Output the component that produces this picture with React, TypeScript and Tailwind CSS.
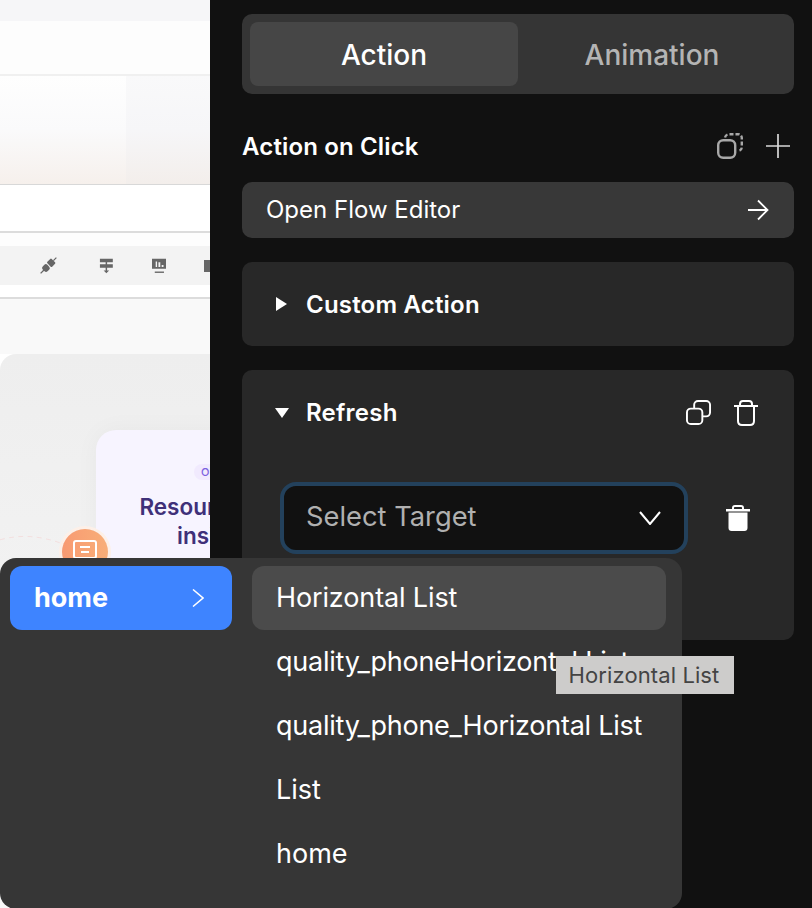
import React from "react";

const font = { fontFamily: "Inter, 'Liberation Sans', sans-serif" };

function Preview() {
  return (
    <div className="flex h-[908px] w-[210px] shrink-0 flex-col overflow-hidden bg-white">
      <div className="h-[21px] bg-[#f6f6f8]" />
      <div className="h-[55px] border-b-2 border-[#f0f0f0] bg-[#fdfdfd]" />
      <div className="flex h-[109px] border-b border-[#d8d8d8]">
        <div className="w-[126px] bg-gradient-to-b from-[#fefefe] via-[#fafafb] to-[#f6f0ec]" />
        <div className="flex-1 bg-gradient-to-b from-[#f9f9fa] via-[#f6f6f8] to-[#f3eeeb]" />
      </div>
      <div className="h-[48px] border-b-2 border-[#dcdcdc] bg-white" />
      <div className="h-[13px] bg-[#fdfdfd]" />
      <div className="flex h-[39px] items-center bg-[#f3f3f3] text-[#666666]">
        <svg viewBox="0 0 16 16" className="ml-[40px] h-[17px] w-[17px] overflow-visible" fill="currentColor" stroke="none">
          <g transform="rotate(45 8 8)">
            <rect x="4.800" y="1.500" width="6.400" height="5.800" rx="1" />
            <rect x="4.800" y="8.300" width="6.400" height="6.200" rx="2" />
            <rect x="7.400" y="-2.500" width="1.200" height="4" />
            <rect x="7.400" y="14" width="1.200" height="4.500" />
          </g>
        </svg>
        <svg viewBox="0 0 16 16" className="ml-[42px] h-[16px] w-[16px]" fill="currentColor">
          <path d="M1 0h14v4H1zM1 6h14v4H1z" />
          <path d="M7.200 3h1.600v10H11l-3 3-3-3h2.200z" />
        </svg>
        <svg viewBox="0 0 16 16" className="ml-[38px] h-[16px] w-[16px]" fill="currentColor">
          <path fillRule="evenodd" d="M0 0h16v11H0zM4 3h1.500v6H4zM7 4h2v5H7zM10.500 7h2v2h-2z" />
          <path d="M3 14h10v1.500H3z" />
        </svg>
        <div className="ml-[38px] h-[12px] w-[6px] bg-[#666666]" />
      </div>
      <div className="h-[14px] border-b-2 border-[#dcdcdc] bg-white" />
      <div className="h-[55px] bg-[#f9f9f9]" />
      <div className="relative flex-1 rounded-tl-[16px] bg-gradient-to-b from-[#eeeeee] to-[#f8f8f8] pl-[96px] pt-[76px]">
        <div className="h-[300px] w-[160px] rounded-tl-[20px] bg-[#f7f4ff] pt-[34px] shadow-[0_0_24px_rgba(0,0,0,0.04)]">
          <div className="ml-[98px] flex h-[16px] w-[40px] items-center rounded-l-full bg-[#f1eafe] pl-[7px] text-[11px] font-medium text-[#7b61e0]">
            Our
          </div>
          <div className="mt-[12px] w-[248px] whitespace-nowrap text-center text-[22.500px] font-semibold leading-[29px] text-[#3f3079]">
            Resources and
            <br />
            insights
          </div>
        </div>
        <svg viewBox="0 0 100 20" className="absolute left-0 top-[177px] h-[20px] w-[62px]" fill="none" stroke="#f3dede" strokeWidth="1.500" strokeDasharray="8 7">
          <path d="M0 8 C 30 0, 60 0, 100 14" />
        </svg>
        <div className="absolute left-[62px] top-[175px] flex h-[46px] w-[46px] items-start justify-center rounded-full bg-gradient-to-r from-[#f89a72] to-[#f8ae78] pt-[11px] ring-[3px] ring-[#fdf0e8]">
          <svg viewBox="0 0 24 18" className="h-[18px] w-[24px]" fill="none" stroke="#ffffff" strokeWidth="2">
            <rect x="1" y="1" width="22" height="17" rx="2" />
            <path d="M7 7h10M8 12h8" />
          </svg>
        </div>
      </div>
    </div>
  );
}

function Panel() {
  return (
    <div className="flex min-h-[908px] flex-1 flex-col bg-[#111111] pl-[32px] pr-[18px] pt-[14px] text-white">
      <div className="flex h-[80px] rounded-[10px] bg-[#353535] p-[8px]">
        <div className="flex w-[268px] items-center justify-center rounded-[8px] bg-[#464646] pt-[1px] text-[28px] font-[550]">
          Action
        </div>
        <div className="flex flex-1 items-center justify-center pt-[1px] text-[28px] font-[550] text-[#b4b4b4]">
          Animation
        </div>
      </div>

      <div className="mt-[36px] flex h-[32px] items-center justify-between">
        <span className="pt-[1px] text-[24px] font-semibold tracking-[0.15px]">Action on Click</span>
        <div className="flex items-center gap-[23px] pr-[4px] text-[#a8a8a8]">
          <svg viewBox="0 0 26 26" className="h-[26px] w-[26px]" fill="none" stroke="currentColor" strokeWidth="2.400">
            <rect x="1.200" y="7.200" width="17" height="17.600" rx="5" />
            <path d="M8 4.500C8.500 2.500 10 1.200 12 1.200h9c2.300 0 3.800 1.500 3.800 3.800v9c0 2-1 3.300-2.500 3.800" strokeDasharray="4 2" />
          </svg>
          <svg viewBox="0 0 24 24" className="h-[24px] w-[24px] text-[#d8d8d8]" fill="none" stroke="currentColor" strokeWidth="1.700">
            <path d="M12 0v24M0 12h24" />
          </svg>
        </div>
      </div>

      <div className="mt-[20px] flex h-[56px] items-center justify-between rounded-[10px] bg-[#383838] pl-[24px] pr-[26px]">
        <span className="text-[24px]">Open Flow Editor</span>
        <svg viewBox="0 0 20 20" className="h-[20px] w-[20px] overflow-visible" fill="none" stroke="#ffffff" strokeWidth="1.800">
          <path d="M0 10h19M10 .5 19.500 10 10 19.500" />
        </svg>
      </div>

      <div className="mt-[24px] flex h-[84px] items-center rounded-[10px] bg-[#282828] pl-[34px]">
        <div className="h-0 w-0 border-y-[7px] border-l-[11px] border-y-transparent border-l-white" />
        <span className="ml-[19px] pt-[2px] text-[24px] font-semibold tracking-[0.2px]">Custom Action</span>
      </div>

      <div className="mt-[24px] h-[270px] rounded-[10px] bg-[#282828]">
        <div className="flex h-[85px] items-center pl-[33px] pr-[36px]">
          <div className="h-0 w-0 border-x-[7.500px] border-t-[10px] border-x-transparent border-t-white" />
          <span className="ml-[17px] flex-1 pt-[1px] text-[24px] font-semibold tracking-[0.25px]">Refresh</span>
          <svg viewBox="0 0 26 26" className="h-[25px] w-[25px]" fill="none" stroke="#ffffff" strokeWidth="2">
            <rect x="1" y="9" width="16" height="16" rx="4" />
            <path d="M8.500 9V5c0-2.200 1.800-4 4-4H21c2.200 0 4 1.800 4 4v8c0 2.200-1.800 4-4 4h-4" />
          </svg>
          <svg viewBox="0 0 24 26" className="ml-[23px] h-[26px] w-[24px]" fill="none" stroke="#ffffff" strokeWidth="2">
            <path d="M0 6h24M6 6V4c0-1.700 1-3 3-3h6c2 0 3 1.300 3 3v2" />
            <path d="M4 6v15c0 2.500 1.500 4 4 4h8c2.500 0 4-1.500 4-4V6" />
          </svg>
        </div>
        <div className="mt-[27px] flex items-center pl-[38px]">
          <div className="flex h-[72px] w-[408px] items-center justify-between rounded-[16px] border-4 border-[#23415c] bg-[#111111] pb-[1px] pl-[22px] pr-[23px]">
            <span className="text-[27.300px] text-[#b0b0b0]">Select Target</span>
            <svg viewBox="0 0 22 14" className="h-[14px] w-[22px]" fill="none" stroke="#ffffff" strokeWidth="2">
              <path d="M1 1 11 13 21 1" />
            </svg>
          </div>
          <svg viewBox="0 0 24 26" className="ml-[38px] h-[26px] w-[24px]" fill="#ffffff">
            <path fillRule="evenodd" d="M6 4V3c0-1.700 1-3 3-3h6c2 0 3 1.300 3 3v1h6v2.500H0V4zM8 4h8V3c0-.6-.4-1-1-1H9c-.6 0-1 .4-1 1z" />
            <path d="M2.500 7.500h19V23c0 1.800-1.200 3-3 3h-13c-1.800 0-3-1.200-3-3z" />
          </svg>
        </div>
      </div>
    </div>
  );
}

function Menu() {
  const items = [
    { t: "quality_phoneHorizontal List", c: "tracking-[-0.24px]" },
    { t: "quality_phone_Horizontal List", c: "tracking-[-0.24px]" },
    { t: "List", c: "" },
    { t: "home", c: "" },
  ];
  return (
    <div className="absolute left-0 top-[558px] flex h-[351px] w-[682px] gap-[20px] rounded-[16px] bg-[#363636] p-[8px] pl-[10px] text-white">
      <div className="flex h-[64px] w-[222px] items-center justify-between rounded-[12px] bg-[#3e84ff] pl-[24px] pr-[28px]">
        <span className="text-[27px] font-bold">home</span>
        <svg viewBox="0 0 12 18" className="h-[18px] w-[12px]" fill="none" stroke="#ffffff" strokeWidth="1.500">
          <path d="M1 .5 11 9 1 17.500" />
        </svg>
      </div>
      <div className="flex w-[414px] flex-col">
        <div className="flex h-[64px] items-center rounded-[12px] bg-[#4b4b4b] pl-[24px] text-[27px] tracking-[-0.13px]">
          Horizontal List
        </div>
        {items.map((i) => (
          <div key={i.t} className={`flex h-[64px] items-center whitespace-nowrap pl-[24px] text-[27px] ${i.c}`}>
            {i.t}
          </div>
        ))}
      </div>
    </div>
  );
}

export default function App() {
  return (
    <div className="relative flex h-[908px] w-[812px] overflow-hidden" style={font}>
      <Preview />
      <Panel />
      <Menu />
      <div className="absolute left-[556px] top-[656px] flex h-[38px] w-[178px] items-center justify-center bg-[#cdcccb] pr-[2px] text-[22px] tracking-[0.1px] text-[#444444]">
        Horizontal List
      </div>
    </div>
  );
}
